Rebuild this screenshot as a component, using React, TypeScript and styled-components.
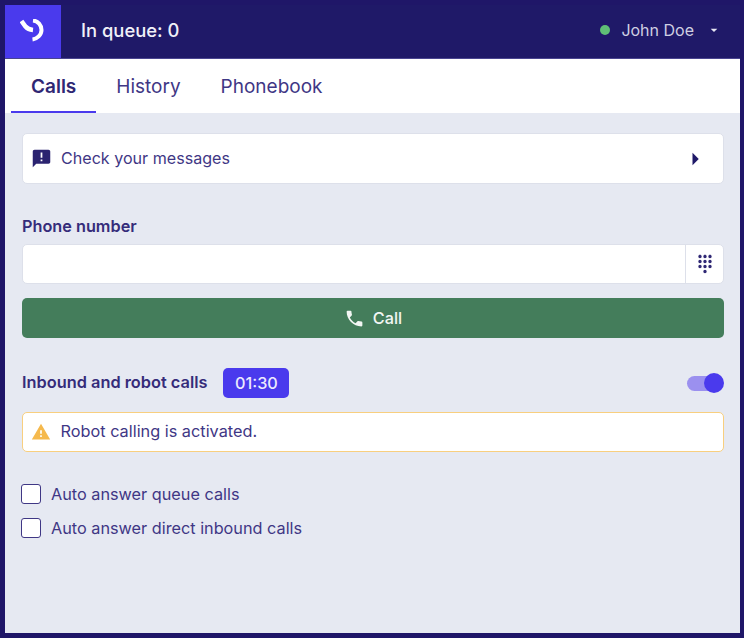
import React from 'react'
import styled, { createGlobalStyle } from 'styled-components'
import { MdAnnouncement, MdArrowDropDown, MdArrowRight, MdDialpad, MdPhone, MdWarning } from 'react-icons/md'

const GlobalStyle = createGlobalStyle`
  html, body {
    margin: 0;
    padding: 0;
    background: #1f1668;
  }
  * {
    box-sizing: border-box;
  }
`
const Frame = styled.div`
  width: 744px;
  height: 638px;
  padding: 5px 4px 5px 5px;
  background: #1f1668;
  font-family: 'Inter', 'Liberation Sans', sans-serif;
  color: #3a3180;
`
const Panel = styled.div`
  height: 628px;
  background: #e6e9f2;
  display: flex;
  flex-direction: column;
`
const Header = styled.header`
  height: 54px;
  background: #1f1968;
  border-bottom: 1px solid #4a4590;
  display: flex;
  align-items: stretch;
  color: #f0f0f8;
`
const LogoBox = styled.div`
  width: 56px;
  height: 53px;
  background: #4a3aed;
  display: flex;
  align-items: center;
  justify-content: center;
`
const HeaderInfo = styled.div`
  flex: 1;
  padding-bottom: 4px;
  display: flex;
  align-items: center;
`
const Queue = styled.div`
  margin-left: 20px;
  font-size: 18.4px;
  font-weight: 500;
  flex: 1;
`
const Status = styled.span`
  width: 10px;
  height: 10px;
  border-radius: 50%;
  background: #5fbf76;
  margin-right: 11px;
`
const UserName = styled.span`
  font-size: 16px;
  color: #cfcfe2;
`
const UserCaret = styled.div`
  display: flex;
  margin: 0 18px 0 12px;
  color: #e6e6f2;
`
const Tabs = styled.nav`
  height: 54px;
  background: #fff;
  padding-left: 6px;
  display: flex;
`
const Tab = styled.div<{ $active?: boolean }>`
  padding: 3px 20px 0;
  display: flex;
  align-items: center;
  font-size: 19px;
  font-weight: ${p => (p.$active ? 600 : 400)};
  color: ${p => (p.$active ? '#2f2774' : '#3f3785')};
  border-bottom: 2px solid ${p => (p.$active ? '#4a3aed' : 'transparent')};
`
const Content = styled.main`
  padding: 20px 16px 0 17px;
  display: flex;
  flex-direction: column;
`
const MessageCard = styled.div`
  height: 51px;
  background: #fff;
  border: 1px solid #dde0ea;
  border-radius: 5px;
  padding: 0 13px 0 8px;
  display: flex;
  align-items: center;
  font-size: 16.1px;
  color: #3f3785;
`
const CardIcon = styled.div`
  display: flex;
  color: #2b2370;
  margin-right: 9px;
`
const CardText = styled.span`
  flex: 1;
  padding-bottom: 2px;
`
const CardArrow = styled.div`
  display: flex;
  color: #1f1968;
`
const FieldLabel = styled.label`
  margin-top: 32px;
  height: 20px;
  line-height: 20px;
  font-size: 16.25px;
  font-weight: 600;
  color: #352c7a;
`
const InputGroup = styled.div`
  margin-top: 8px;
  height: 40px;
  background: #fff;
  border: 1px solid #dde0ea;
  border-radius: 5px;
  display: flex;
`
const PhoneInput = styled.input`
  flex: 1;
  border: 0;
  outline: 0;
  background: transparent;
`
const DialButton = styled.div`
  width: 38px;
  border-left: 1px solid #dde0ea;
  display: flex;
  align-items: center;
  justify-content: center;
  color: #2f2774;
`
const CallButton = styled.button`
  margin-top: 14px;
  height: 40px;
  width: 100%;
  background: #447d5b;
  border: 0;
  border-radius: 5px;
  color: #f2f6f3;
  font-family: inherit;
  font-size: 16.25px;
  font-weight: 500;
  display: flex;
  align-items: center;
  justify-content: center;
  gap: 8px;
`
const RobotRow = styled.div`
  margin-top: 30px;
  height: 30px;
  display: flex;
  align-items: center;
`
const RobotLabel = styled.span`
  padding-bottom: 2px;
  font-size: 16.35px;
  font-weight: 600;
  color: #352c7a;
`
const Timer = styled.span`
  margin-left: 16px;
  width: 66px;
  height: 30px;
  border-radius: 5px;
  background: #4a3aed;
  color: #ecebfd;
  font-size: 16.25px;
  font-weight: 500;
  display: flex;
  align-items: center;
  justify-content: center;
`
const Toggle = styled.div`
  margin-left: auto;
  width: 37px;
  height: 20px;
  position: relative;
  display: flex;
  align-items: center;
`
const ToggleTrack = styled.div`
  width: 34px;
  height: 15px;
  border-radius: 8px;
  background: #9b90ef;
`
const ToggleKnob = styled.div`
  position: absolute;
  right: 0;
  top: 0;
  width: 20px;
  height: 20px;
  border-radius: 50%;
  background: #4a3aed;
`
const Alert = styled.div`
  margin-top: 14px;
  height: 40px;
  background: #fff;
  border: 1.5px solid #f8cf7f;
  border-radius: 5px;
  padding: 0 8px;
  display: flex;
  align-items: center;
  gap: 9.5px;
  font-size: 16.3px;
  color: #3f3785;
`
const AlertIcon = styled.div`
  display: flex;
  color: #f5b94d;
`
const AlertText = styled.span`
  padding-bottom: 2px;
`
const Options = styled.div`
  margin: 32px 0 0 -1px;
  display: flex;
  flex-direction: column;
  gap: 14px;
`
const Option = styled.label`
  height: 20px;
  display: flex;
  align-items: center;
  gap: 10px;
  font-size: 16.25px;
  color: #3f3785;
`
const CheckBox = styled.span`
  width: 20px;
  height: 20px;
  background: #fff;
  border: 1.5px solid #3f3785;
  border-radius: 3px;
`

const Logo = () => (
  <svg width="26" height="26" viewBox="0 0 26 26" fill="none">
    <path d="M1.5 2 L5.5 7.5 Q8 10.5 13 11" stroke="#fff" strokeWidth="4.5" />
    <path d="M13 1.5 C18 2 21.5 6 21.5 11 C21.5 16 17 20 12.5 20.5" stroke="#fff" strokeWidth="4" />
  </svg>
)

const App: React.FC = () => {
  return (
    <Frame>
      <GlobalStyle />
      <Panel>
        <Header>
          <LogoBox>
            <Logo />
          </LogoBox>
          <HeaderInfo>
            <Queue>In queue: 0</Queue>
            <Status />
            <UserName>John Doe</UserName>
            <UserCaret>
              <MdArrowDropDown size={16} />
            </UserCaret>
          </HeaderInfo>
        </Header>
        <Tabs>
          <Tab $active>Calls</Tab>
          <Tab>History</Tab>
          <Tab>Phonebook</Tab>
        </Tabs>
        <Content>
          <MessageCard>
            <CardIcon>
              <MdAnnouncement size={21} />
            </CardIcon>
            <CardText>Check your messages</CardText>
            <CardArrow>
              <MdArrowRight size={30} />
            </CardArrow>
          </MessageCard>
          <FieldLabel>Phone number</FieldLabel>
          <InputGroup>
            <PhoneInput aria-label="Phone number" />
            <DialButton>
              <MdDialpad size={20} />
            </DialButton>
          </InputGroup>
          <CallButton>
            <MdPhone size={21} />
            Call
          </CallButton>
          <RobotRow>
            <RobotLabel>Inbound and robot calls</RobotLabel>
            <Timer>01:30</Timer>
            <Toggle>
              <ToggleTrack />
              <ToggleKnob />
            </Toggle>
          </RobotRow>
          <Alert>
            <AlertIcon>
              <MdWarning size={20} />
            </AlertIcon>
            <AlertText>Robot calling is activated.</AlertText>
          </Alert>
          <Options>
            <Option>
              <CheckBox />
              Auto answer queue calls
            </Option>
            <Option>
              <CheckBox />
              Auto answer direct inbound calls
            </Option>
          </Options>
        </Content>
      </Panel>
    </Frame>
  )
}

export default App
